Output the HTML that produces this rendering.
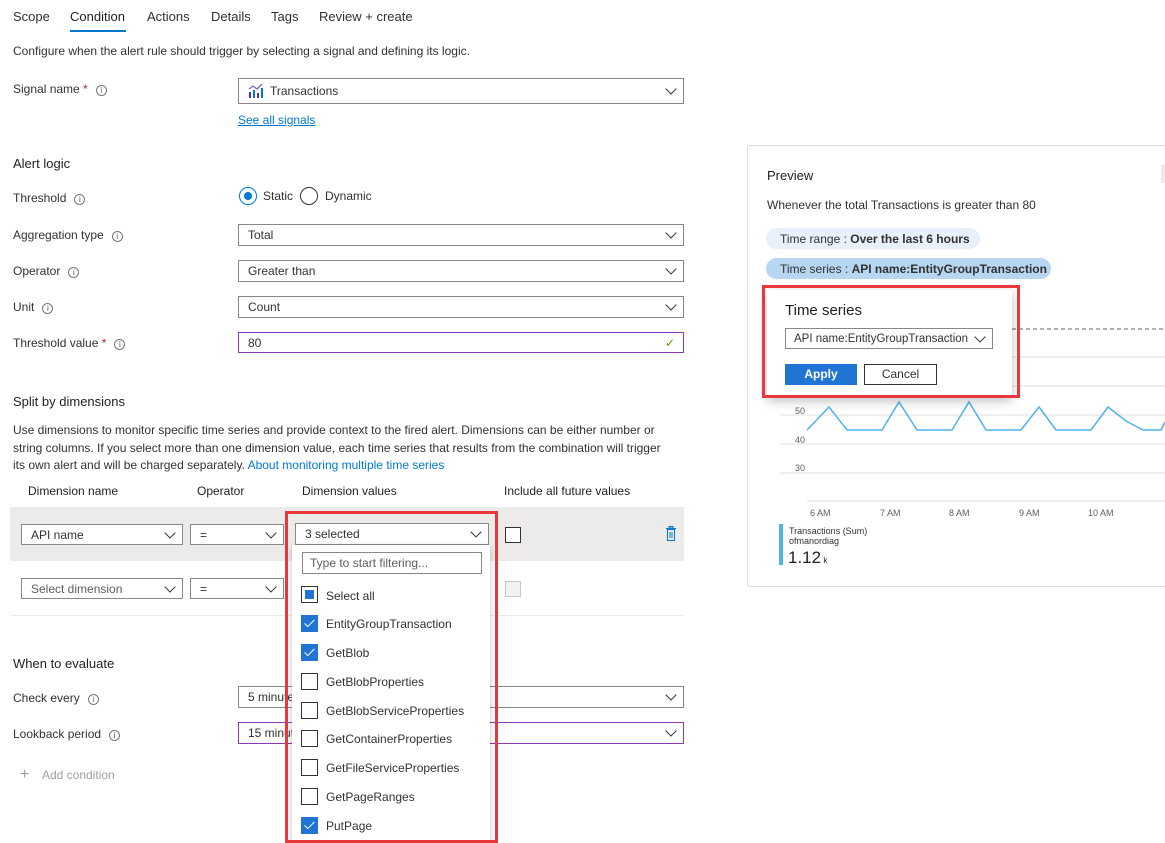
<!DOCTYPE html>
<html><head><meta charset="utf-8"><style>
*{box-sizing:border-box;margin:0;padding:0}
body{width:1165px;height:843px;overflow:hidden;background:#fff;font-family:"Liberation Sans",sans-serif;font-size:12px;color:#323130;position:relative}
.a{position:absolute;white-space:nowrap}
.box{position:absolute;border:1px solid #8a8886;background:#fff;padding-left:9px;display:flex;align-items:center}
.chev{position:absolute;right:8px;top:50%;width:8px;height:8px;border-right:1.3px solid #323130;border-bottom:1.3px solid #323130;transform:translateY(-75%) rotate(45deg)}
.info{display:inline-block;width:11px;height:11px;border:1px solid #777;border-radius:50%;font-size:8px;line-height:9px;text-align:center;color:#555;margin-left:8px;vertical-align:0}
.req{color:#a4262c}
.cb{position:absolute;width:17px;height:17px;border:1px solid #323130;background:#fff}
.cb.on{background:#1f74d4;border-color:#1f74d4}
.cb.on::after{content:"";position:absolute;left:5px;top:1px;width:4px;height:9px;border-right:1.3px solid #fff;border-bottom:1.3px solid #fff;transform:rotate(45deg)}
.h{font-size:13px;color:#201f1e}
</style></head><body>
<div class="a" style="left:13px;top:9px;font-size:13px">Scope</div>
<div class="a" style="left:70px;top:9px;font-size:13px;color:#201f1e">Condition</div>
<div class="a" style="left:70px;top:30px;width:56px;height:2px;background:#0078d4"></div>
<div class="a" style="left:147px;top:9px;font-size:13px">Actions</div>
<div class="a" style="left:211px;top:9px;font-size:13px">Details</div>
<div class="a" style="left:271px;top:9px;font-size:13px">Tags</div>
<div class="a" style="left:319px;top:9px;font-size:13px">Review + create</div>
<div class="a" style="left:13px;top:44px">Configure when the alert rule should trigger by selecting a signal and defining its logic.</div>

<div class="a" style="left:13px;top:82px">Signal name <span class="req">*</span><span class="info">i</span></div>
<div class="box" style="left:238px;top:78px;width:446px;height:26px"><svg width="16" height="14" viewBox="0 0 16 14" style="margin-right:6px"><rect x="1" y="8" width="2" height="6" fill="#5c2d91"/><rect x="5" y="6" width="2" height="8" fill="#0078d4"/><rect x="9" y="9" width="2" height="5" fill="#5c2d91"/><rect x="13" y="4" width="2" height="10" fill="#0078d4"/><polyline points="1,5 5,2 9,5 14,0" fill="none" stroke="#8661c5" stroke-width="1.3"/></svg>Transactions<span class="chev"></span></div>
<div class="a" style="left:238px;top:113px;color:#0078d4;text-decoration:underline">See all signals</div>

<div class="a h" style="left:13px;top:156px">Alert logic</div>
<div class="a" style="left:13px;top:191px">Threshold<span class="info">i</span></div>
<div class="a" style="left:239px;top:187px;width:18px;height:18px;border:1px solid #0078d4;border-radius:50%"><div style="margin:4px;width:8px;height:8px;border-radius:50%;background:#0078d4"></div></div>
<div class="a" style="left:263px;top:189px">Static</div>
<div class="a" style="left:300px;top:187px;width:18px;height:18px;border:1px solid #323130;border-radius:50%"></div>
<div class="a" style="left:325px;top:189px">Dynamic</div>

<div class="a" style="left:13px;top:228px">Aggregation type<span class="info">i</span></div>
<div class="box" style="left:238px;top:224px;width:446px;height:22px">Total<span class="chev"></span></div>
<div class="a" style="left:13px;top:264px">Operator<span class="info">i</span></div>
<div class="box" style="left:238px;top:260px;width:446px;height:22px">Greater than<span class="chev"></span></div>
<div class="a" style="left:13px;top:300px">Unit<span class="info">i</span></div>
<div class="box" style="left:238px;top:296px;width:446px;height:22px">Count<span class="chev"></span></div>
<div class="a" style="left:13px;top:336px">Threshold value <span class="req">*</span><span class="info">i</span></div>
<div class="box" style="left:238px;top:332px;width:446px;height:21px;border-color:#8a3bb1">80<span style="position:absolute;right:8px;top:3px;color:#57a300">✓</span></div>

<div class="a h" style="left:13px;top:394px">Split by dimensions</div>
<div class="a" style="left:13px;top:422px;line-height:17.5px;white-space:normal;width:660px">Use dimensions to monitor specific time series and provide context to the fired alert. Dimensions can be either number or string columns. If you select more than one dimension value, each time series that results from the combination will trigger its own alert and will be charged separately. <span style="color:#0078d4">About monitoring multiple time series</span></div>

<div class="a" style="left:28px;top:484px;color:#201f1e">Dimension name</div>
<div class="a" style="left:197px;top:484px;color:#201f1e">Operator</div>
<div class="a" style="left:302px;top:484px;color:#201f1e">Dimension values</div>
<div class="a" style="left:504px;top:484px;color:#201f1e">Include all future values</div>
<div class="a" style="left:10px;top:507px;width:674px;height:54px;background:#edebe9"></div>
<div class="box" style="left:21px;top:524px;width:162px;height:21px">API name<span class="chev"></span></div>
<div class="box" style="left:190px;top:524px;width:94px;height:21px">=<span class="chev"></span></div>
<div class="box" style="left:295px;top:523px;width:194px;height:22px">3 selected<span class="chev"></span></div>
<div class="cb" style="left:505px;top:527px;width:16px;height:16px"></div>
<svg class="a" style="left:665px;top:526px" width="12" height="15" viewBox="0 0 12 15"><rect x="1" y="2" width="10" height="1.2" fill="#0078d4"/><rect x="4" y="0.5" width="4" height="1.5" fill="none" stroke="#0078d4"/><rect x="2.5" y="3.5" width="7" height="11" fill="none" stroke="#0078d4"/><line x1="5" y1="6" x2="5" y2="12" stroke="#0078d4"/><line x1="7" y1="6" x2="7" y2="12" stroke="#0078d4"/></svg>
<div class="box" style="left:21px;top:578px;width:162px;height:21px;color:#605e5c">Select dimension<span class="chev"></span></div>
<div class="box" style="left:190px;top:578px;width:94px;height:21px">=<span class="chev"></span></div>
<div class="cb" style="left:505px;top:581px;width:16px;height:16px;border-color:#c8c6c4;background:#f3f2f1"></div>
<div class="a" style="left:10px;top:615px;width:674px;height:1px;background:#edebe9"></div>

<div class="a h" style="left:13px;top:656px">When to evaluate</div>
<div class="a" style="left:13px;top:691px">Check every<span class="info">i</span></div>
<div class="box" style="left:238px;top:686px;width:446px;height:22px">5 minutes<span class="chev"></span></div>
<div class="a" style="left:13px;top:727px">Lookback period<span class="info">i</span></div>
<div class="box" style="left:238px;top:722px;width:446px;height:22px;border-color:#8a3bb1">15 minutes<span class="chev"></span></div>
<div class="a" style="left:20px;top:766px;color:#a19f9d;font-size:16px">+</div>
<div class="a" style="left:42px;top:768px;color:#a19f9d">Add condition</div>

<div class="a" style="left:292px;top:545px;width:198px;height:298px;background:#fff;box-shadow:0 2px 6px rgba(0,0,0,.25)"></div>
<div class="box" style="left:302px;top:552px;width:180px;height:22px;color:#605e5c;padding-left:7px">Type to start filtering...</div>
<div class="cb" style="left:301px;top:586px"><div style="margin:3px;width:9px;height:9px;background:#1f74d4"></div></div>
<div class="a" style="left:326px;top:589px">Select all</div>
<div class="cb on" style="left:301px;top:615px"></div><div class="a" style="left:326px;top:617px">EntityGroupTransaction</div>
<div class="cb on" style="left:301px;top:644px"></div><div class="a" style="left:326px;top:646px">GetBlob</div>
<div class="cb" style="left:301px;top:673px"></div><div class="a" style="left:326px;top:675px">GetBlobProperties</div>
<div class="cb" style="left:301px;top:702px"></div><div class="a" style="left:326px;top:704px">GetBlobServiceProperties</div>
<div class="cb" style="left:301px;top:730px"></div><div class="a" style="left:326px;top:732px">GetContainerProperties</div>
<div class="cb" style="left:301px;top:759px"></div><div class="a" style="left:326px;top:761px">GetFileServiceProperties</div>
<div class="cb" style="left:301px;top:788px"></div><div class="a" style="left:326px;top:790px">GetPageRanges</div>
<div class="cb on" style="left:301px;top:817px"></div><div class="a" style="left:326px;top:819px">PutPage</div>
<div class="a" style="left:285px;top:511px;width:213px;height:332px;border:3px solid #e8383d"></div>

<div class="a" style="left:747px;top:145px;width:430px;height:442px;border:1px solid #e1dfdd;border-radius:2px"></div>
<div class="a" style="left:1161px;top:165px;width:4px;height:18px;background:#edebe9"></div>
<div class="a" style="left:767px;top:168px;font-size:13px;color:#201f1e">Preview</div>
<div class="a" style="left:767px;top:198px">Whenever the total Transactions is greater than 80</div>
<div class="a" style="left:766px;top:228px;width:214px;height:21px;border-radius:11px;background:#e8f1fb;padding:4px 0 0 14px">Time range : <b>Over the last 6 hours</b></div>
<div class="a" style="left:766px;top:258px;width:285px;height:21px;border-radius:11px;background:#b6d6f2;padding:4px 0 0 14px">Time series : <b>API name:EntityGroupTransaction</b></div>

<svg class="a" style="left:770px;top:320px" width="395" height="200">
<line x1="242" y1="9" x2="395" y2="9" stroke="#605e5c" stroke-dasharray="4,3"/>
<g stroke="#e1dfdd"><line x1="10" y1="37" x2="395" y2="37"/><line x1="10" y1="66" x2="395" y2="66"/><line x1="10" y1="95" x2="395" y2="95"/><line x1="10" y1="124" x2="395" y2="124"/><line x1="10" y1="153" x2="395" y2="153"/><line x1="37" y1="181" x2="395" y2="181"/></g>
<g fill="#605e5c" font-size="9" font-family="Liberation Sans"><text x="25" y="94">50</text><text x="25" y="123">40</text><text x="25" y="151">30</text>
<text x="40" y="196">6 AM</text><text x="110" y="196">7 AM</text><text x="179" y="196">8 AM</text><text x="249" y="196">9 AM</text><text x="318" y="196">10 AM</text></g>
<polyline fill="none" stroke="#4fb3ea" stroke-width="1.5" points="37,110 59,87 77,110 112,110 129,82 147,110 182,110 199,82 216,110 251,110 269,87 286,110 321,110 338,87 356,101 373,110 391,110 395,102"/>
</svg>
<div class="a" style="left:779px;top:524px;width:4px;height:41px;background:#4fb3ea"></div>
<div class="a" style="left:789px;top:526px;font-size:9px;line-height:10px">Transactions (Sum)<br>ofmanordiag</div>
<div class="a" style="left:788px;top:548px;font-size:17px;color:#201f1e">1.12<span style="font-size:8px"> k</span></div>

<div class="a" style="left:767px;top:290px;width:245px;height:108px;background:#fff;box-shadow:0 3px 10px rgba(0,0,0,.25)"></div>
<div class="a" style="left:785px;top:302px;font-size:15px;color:#201f1e">Time series</div>
<div class="box" style="left:785px;top:328px;width:208px;height:21px;padding-left:8px;font-size:11.5px">API name:EntityGroupTransaction<span class="chev"></span></div>
<div class="a" style="left:785px;top:364px;width:72px;height:21px;background:#1f74d4;color:#fff;font-weight:bold;text-align:center;line-height:21px">Apply</div>
<div class="a" style="left:864px;top:364px;width:73px;height:21px;border:1px solid #323130;text-align:center;line-height:19px">Cancel</div>
<div class="a" style="left:762px;top:285px;width:258px;height:113px;border:3px solid #e8383d"></div>
</body></html>
